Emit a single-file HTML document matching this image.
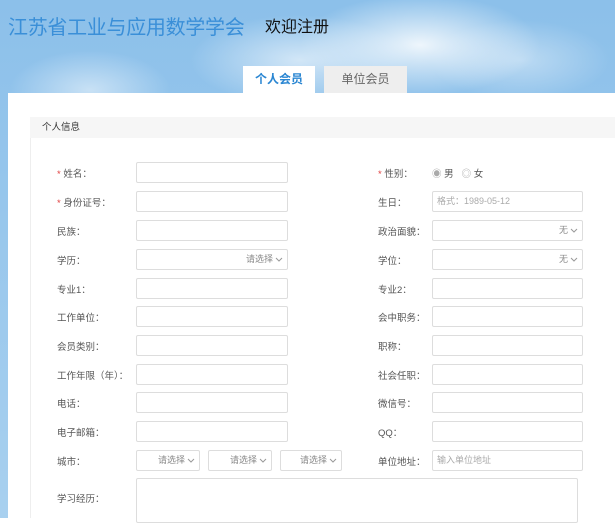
<!DOCTYPE html>
<html><head><meta charset="utf-8"><style>
*{margin:0;padding:0;box-sizing:border-box}
html,body{background:#fff}
body{width:615px;height:518px;overflow:hidden;position:relative;font-family:"Liberation Sans","Noto Sans CJK SC",sans-serif;font-size:10px;color:#444}
.sky{position:absolute;left:0;top:0;width:615px;height:518px;
background:
radial-gradient(ellipse 120px 50px at 420px 45px,rgba(255,255,255,.85),rgba(255,255,255,0)),
radial-gradient(ellipse 110px 45px at 300px 60px,rgba(255,255,255,.6),rgba(255,255,255,0)),
radial-gradient(ellipse 80px 40px at 90px 90px,rgba(255,255,255,.5),rgba(255,255,255,0)),
radial-gradient(ellipse 90px 40px at 520px 60px,rgba(255,255,255,.4),rgba(255,255,255,0)),
linear-gradient(180deg,#8cc0ea,#a8d0ef);}
.t1{position:absolute;left:8px;top:11px;font-size:20px;color:#3a8fd8;letter-spacing:-.3px;white-space:nowrap}
.t2{position:absolute;left:265px;top:13px;font-size:16px;color:#111}
.tab{position:absolute;top:66px;height:27px;line-height:27px;text-align:center;font-size:12px}
.panel{position:absolute;left:8px;top:93px;right:0;bottom:0;background:#fff}
.sec{position:absolute;left:30px;top:117px;right:0;bottom:0;border-left:1px solid #eee;border-top:1px solid #eee}
.sh{position:absolute;left:30px;top:117px;right:0;height:21px;background:#f6f6f6;line-height:21px;padding-left:12px;font-size:9.5px;color:#333}
.l{position:absolute;font-size:9.5px;color:#555}
.l b{color:#e04040;font-weight:normal}
.i{position:absolute;height:21px;border:1px solid #ddd;border-radius:2px;background:#fff;font-size:9px;color:#888;line-height:19px;text-align:right;padding-right:4px}
.i svg{vertical-align:middle;margin-left:2px}
.ph{text-align:left;padding-left:4px;color:#aaa}
.c{color:#aaa}
</style></head><body>
<div class="sky"></div>
<div class="t1">江苏省工业与应用数学学会</div>
<div class="t2">欢迎注册</div>
<div class="panel"></div>
<div class="tab" style="left:243px;width:72px;background:#fff;color:#2a86d2;font-weight:bold">个人会员</div>
<div class="tab" style="left:324px;width:83px;background:#eee;color:#666">单位会员</div>
<div class="sec"></div>
<div class="sh">个人信息</div>

<div class="l" style="left:57px;top:166px"><b>* </b>姓名：</div>
<div class="i" style="left:136px;top:162px;width:152px"></div>
<div class="l" style="left:378px;top:166px"><b>* </b>性别：</div>
<div class="l" style="left:432px;top:166px"><span class="c">◉</span> 男 &nbsp; <span class="c">◎</span> 女</div>

<div class="l" style="left:57px;top:195px"><b>* </b>身份证号：</div>
<div class="i" style="left:136px;top:191px;width:152px"></div>
<div class="l" style="left:378px;top:195px">生日：</div>
<div class="i ph" style="left:432px;top:191px;width:151px">格式：1989-05-12</div>

<div class="l" style="left:57px;top:224px">民族：</div>
<div class="i" style="left:136px;top:220px;width:152px"></div>
<div class="l" style="left:378px;top:224px">政治面貌：</div>
<div class="i" style="left:432px;top:220px;width:151px">无<svg width="8" height="6"><path d="M1 1L4 4L7 1" fill="none" stroke="#999"/></svg></div>

<div class="l" style="left:57px;top:253px">学历：</div>
<div class="i" style="left:136px;top:249px;width:152px">请选择<svg width="8" height="6"><path d="M1 1L4 4L7 1" fill="none" stroke="#999"/></svg></div>
<div class="l" style="left:378px;top:253px">学位：</div>
<div class="i" style="left:432px;top:249px;width:151px">无<svg width="8" height="6"><path d="M1 1L4 4L7 1" fill="none" stroke="#999"/></svg></div>

<div class="l" style="left:57px;top:282px">专业1：</div>
<div class="i" style="left:136px;top:278px;width:152px"></div>
<div class="l" style="left:378px;top:282px">专业2：</div>
<div class="i" style="left:432px;top:278px;width:151px"></div>

<div class="l" style="left:57px;top:310px">工作单位：</div>
<div class="i" style="left:136px;top:306px;width:152px"></div>
<div class="l" style="left:378px;top:310px">会中职务：</div>
<div class="i" style="left:432px;top:306px;width:151px"></div>

<div class="l" style="left:57px;top:339px">会员类别：</div>
<div class="i" style="left:136px;top:335px;width:152px"></div>
<div class="l" style="left:378px;top:339px">职称：</div>
<div class="i" style="left:432px;top:335px;width:151px"></div>

<div class="l" style="left:57px;top:368px">工作年限（年）：</div>
<div class="i" style="left:136px;top:364px;width:152px"></div>
<div class="l" style="left:378px;top:368px">社会任职：</div>
<div class="i" style="left:432px;top:364px;width:151px"></div>

<div class="l" style="left:57px;top:396px">电话：</div>
<div class="i" style="left:136px;top:392px;width:152px"></div>
<div class="l" style="left:378px;top:396px">微信号：</div>
<div class="i" style="left:432px;top:392px;width:151px"></div>

<div class="l" style="left:57px;top:425px">电子邮箱：</div>
<div class="i" style="left:136px;top:421px;width:152px"></div>
<div class="l" style="left:378px;top:425px">QQ：</div>
<div class="i" style="left:432px;top:421px;width:151px"></div>

<div class="l" style="left:57px;top:454px">城市：</div>
<div class="i" style="left:136px;top:450px;width:64px">请选择<svg width="8" height="6"><path d="M1 1L4 4L7 1" fill="none" stroke="#999"/></svg></div>
<div class="i" style="left:208px;top:450px;width:64px">请选择<svg width="8" height="6"><path d="M1 1L4 4L7 1" fill="none" stroke="#999"/></svg></div>
<div class="i" style="left:280px;top:450px;width:62px">请选择<svg width="8" height="6"><path d="M1 1L4 4L7 1" fill="none" stroke="#999"/></svg></div>
<div class="l" style="left:378px;top:454px">单位地址：</div>
<div class="i ph" style="left:432px;top:450px;width:151px">输入单位地址</div>

<div class="l" style="left:57px;top:491px">学习经历：</div>
<div class="i" style="left:136px;top:478px;width:442px;height:45px"></div>
</body></html>
